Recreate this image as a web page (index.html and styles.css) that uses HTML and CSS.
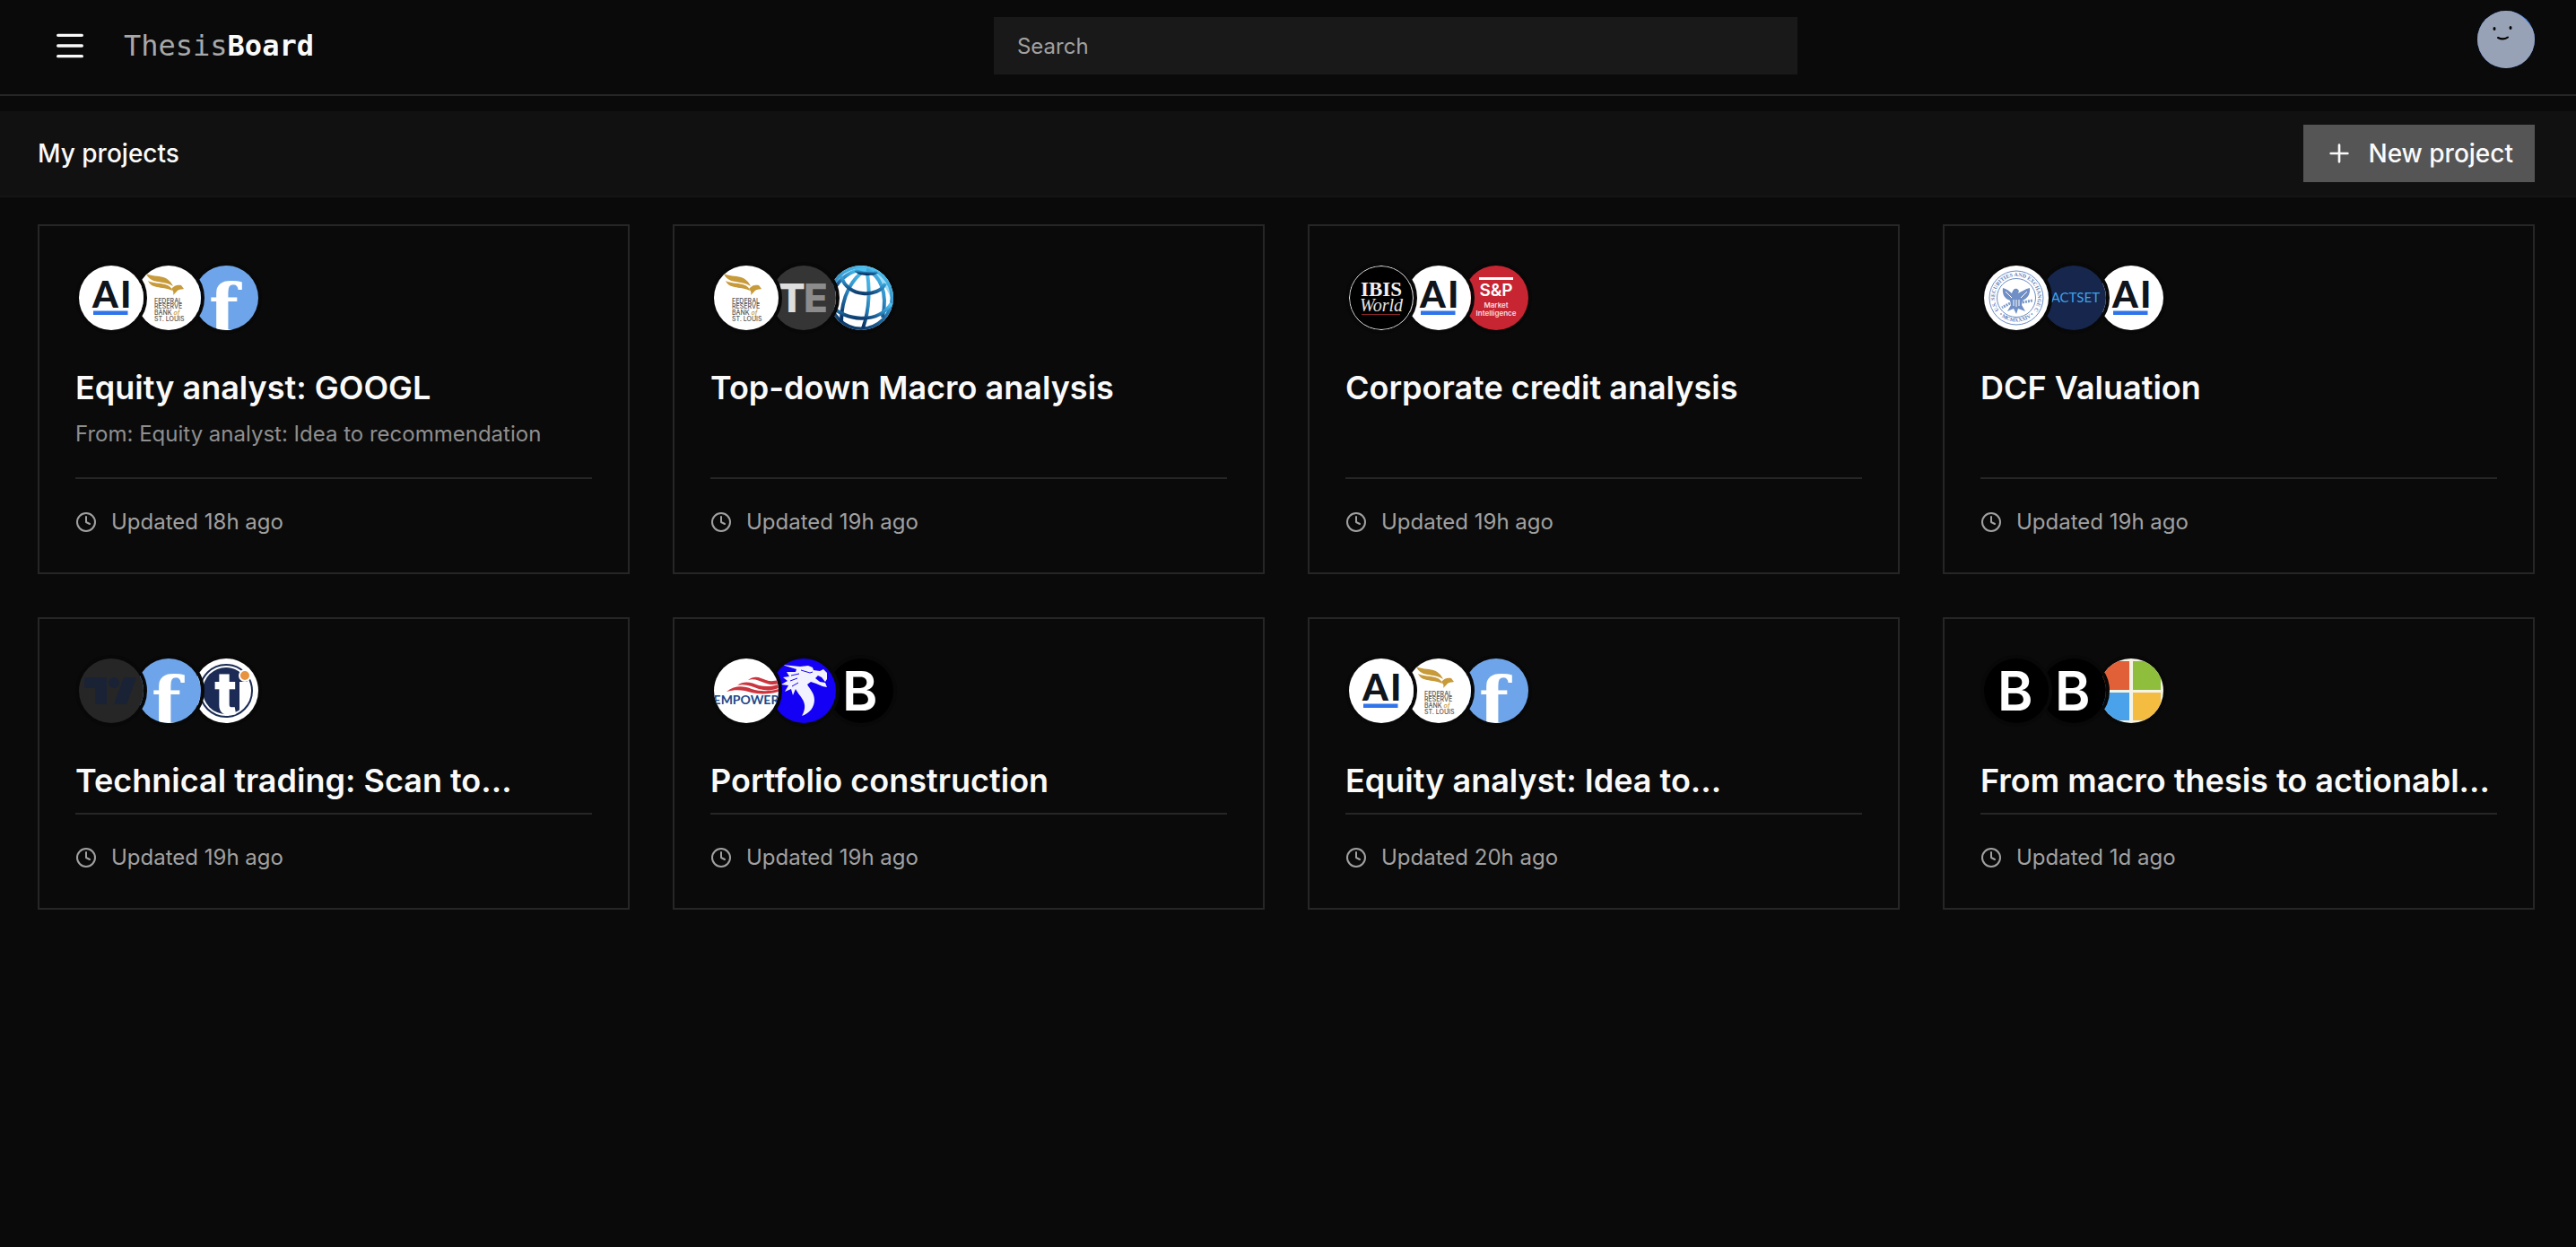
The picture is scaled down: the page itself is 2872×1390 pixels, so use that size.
FILE: index.html
```html
<!DOCTYPE html>
<html lang="en">
<head>
<meta charset="utf-8">
<meta name="viewport" content="width=device-width, initial-scale=1">
<title>ThesisBoard</title>
<link rel="stylesheet" href="styles.css">
</head>
<body>
<svg class="shared-defs" aria-hidden="true">
  <defs>
    <linearGradient id="globe-blue" x1="0.7" y1="0" x2="0.3" y2="1">
      <stop offset="0" stop-color="#4cc0f0"/>
      <stop offset="0.5" stop-color="#2a86c0"/>
      <stop offset="1" stop-color="#0b3566"/>
    </linearGradient>
    <path id="seal-top" d="M16.500 50 A24 24 0 1 1 55.500 50"/>
    <path id="seal-bottom" d="M12 49 A28 28 0 0 0 60 49"/>
  </defs>
</svg>
<svg class="sprite" aria-hidden="true">
  <symbol id="clock" viewBox="0 0 24 24"><g fill="none" stroke="currentColor" stroke-width="2" stroke-linecap="round" stroke-linejoin="round"><circle cx="12" cy="12" r="10"/><path d="M12 6v6l4 2"/></g></symbol>

  <symbol id="logo-ai" viewBox="0 0 72 72">
    <rect width="72" height="72" fill="#fff"/>
    <text class="ai-letters" x="15 46" y="47">AI</text>
    <rect x="16" y="50.500" width="38.500" height="4.500" fill="#2f74ea"/>
  </symbol>

  <symbol id="logo-fred" viewBox="0 0 72 72">
    <rect width="72" height="72" fill="#fff"/>
    <g fill="#c79a3a">
      <path d="M11 9C16 12 24 11 30 13C36 15 39 19 41 23C35 19 29 19 24 18C17 17 13 14 11 9Z"/>
      <path d="M13 17C18 20 26 19 32 21C36 22 39 24 40 28C34 25 28 25 23 24C18 23 15 21 13 17Z"/>
      <path d="M39 26C42 22 46 21 50 22L53 26C50 27 47 26 45 29L41 33C42 30 41 28 39 26Z"/>
    </g>
    <g class="fred-text">
      <text x="20" y="42">FEDERAL</text>
      <text x="20" y="48">RESERVE</text>
      <text x="20" y="55">BANK <tspan class="fred-of">of</tspan></text>
      <text x="20" y="62">ST. LOUIS</text>
    </g>
  </symbol>

  <symbol id="logo-f" viewBox="0 0 72 72">
    <rect width="72" height="72" fill="#6ea5ea"/>
    <text class="f-letter" x="17" y="75">f</text>
  </symbol>

  <symbol id="logo-te" viewBox="0 0 72 72">
    <rect width="72" height="72" fill="#353535"/>
    <text class="te-letters" x="8 36" y="52"><tspan fill="#dedede">T</tspan><tspan fill="#8c8c8c">E</tspan></text>
  </symbol>

  <symbol id="logo-globe" viewBox="0 0 72 72">
    <rect width="72" height="72" fill="#fff"/>
    <path d="M30 1C45-2 66 8 71 26L73 44C66 28 58 12 41 5Z" fill="#5ec4ee" opacity="0.600"/>
    <g fill="none" stroke="url(#globe-blue)" stroke-width="4">
      <circle cx="36" cy="36" r="34.500"/>
      <path d="M42 4C26 14 14 34 14 63"/>
      <path d="M42 4C46 22 46 48 38 70"/>
      <path d="M42 4C58 12 66 30 60 58"/>
      <path d="M42 4C26 4 12 14 5 28"/>
      <path d="M14 12C20 36 56 36 63 20"/>
      <path d="M2 44C18 62 54 66 70 42"/>
      <path d="M30 5C35 10 48 10 54 7"/>
    </g>
  </symbol>

  <symbol id="logo-ibis" viewBox="0 0 72 72">
    <rect width="72" height="72" fill="#000"/>
    <circle cx="36" cy="36" r="35.500" fill="none" stroke="#f4f4f4"/>
    <text class="ibis-top" x="36" y="34">IBIS</text>
    <text class="ibis-bottom" x="36" y="51">World</text>
    <path d="M14 54.500H57" stroke="#8c2626"/>
  </symbol>

  <symbol id="logo-sp" viewBox="0 0 72 72">
    <rect width="72" height="72" fill="#c72531"/>
    <rect x="17" y="13" width="38" height="3" fill="#fff"/>
    <text class="sp-name" x="36" y="34">S&amp;P</text>
    <text class="sp-sub" x="36" y="47">Market</text>
    <text class="sp-sub" x="36" y="56">Intelligence</text>
  </symbol>

  <symbol id="logo-sec" viewBox="0 0 72 72">
    <rect width="72" height="72" fill="#fff"/>
    <g fill="none" stroke="#6b8cc2"><circle cx="36" cy="36" r="30"/><circle cx="36" cy="36" r="21.500"/></g>
    <g class="seal-text">
      <text><textPath href="#seal-top">U.S. SECURITIES AND EXCHANGE COMMISSION</textPath></text>
      <text><textPath href="#seal-bottom" startOffset="50%" text-anchor="middle">• MCMXXXIV •</textPath></text>
    </g>
    <path fill="#6f8fc6" d="M21 25C25 26 28 28 31 31C32 27 34 25 37 26L39 28L38 31C42 29 46 26 51 25C52 32 48 37 43 39L42 44L46 51L38 48L36 54L33 48L26 51L30 44L29 39C23 37 20 32 21 25Z"/>
    <path fill="none" stroke="#fff" d="M24 29L31 36M48 29L41 36M33 38V45M36 38V46M39 38V45"/>
    <path fill="none" stroke="#7d9acb" stroke-width="3" stroke-dasharray="2 1" d="M29 42L20 47M43 41L54 39"/>
  </symbol>

  <symbol id="logo-factset" viewBox="0 0 72 72">
    <rect width="72" height="72" fill="#16264d"/>
    <text class="factset-name" x="65" y="41">FACTSET</text>
  </symbol>

  <symbol id="logo-tv" viewBox="0 0 72 72">
    <rect width="72" height="72" fill="#262626"/>
    <g fill="#1a2236"><path d="M6 21H31V51H18V33H6Z"/><circle cx="39" cy="27" r="6"/><path d="M50 21H64L53 51H39Z"/></g>
  </symbol>

  <symbol id="logo-ti" viewBox="0 0 72 72">
    <rect width="72" height="72" fill="#fff"/>
    <circle cx="36" cy="36" r="26" fill="#1b2b55"/>
    <path d="M51 26H64V52L51 60Z" fill="#fff"/>
    <circle cx="36" cy="36" r="29" fill="none" stroke="#1b2b55" stroke-width="2"/>
    <text class="ti-letter" x="23" y="62">t</text>
    <circle cx="57" cy="19" r="6" fill="#e8933d" stroke="#fff" stroke-width="2"/>
  </symbol>

  <symbol id="logo-empower" viewBox="0 0 72 72">
    <rect width="72" height="72" fill="#fff"/>
    <g fill="#cb353e">
      <path d="M38 24C46 18 52 22 58 24C63 26 67 25 72 24V28C66 30 61 29 56 27C50 25 45 22 38 24Z"/>
      <path d="M26 30C34 24 42 27 50 30C58 32 65 31 72 29V33C65 36 58 36 50 34C42 31 35 28 26 30Z"/>
      <path d="M14 37C24 29 34 31 42 34C52 37 62 37 72 34V37C62 40 50 40 42 38C34 35 24 34 14 37Z"/>
    </g>
    <text class="empower-name" x="36" y="51">EMPOWER</text>
  </symbol>

  <symbol id="logo-dragon" viewBox="0 0 72 72">
    <rect width="72" height="72" fill="#1400f4"/>
    <path fill="#f1f1ff" d="M12 7L32 9L41 8L46 10L47 13L54 14L58 12L62 16L62 23L60 26L56 21L52 19L49 22L54 26L60 27L62 32L57 31L50 28L44 26L40 29C43 34 48 39 48 46C48 54 43 61 34 64C38 57 38 51 35 46C32 41 29 38 27 34L24 41L22 34L15 37L19 30L11 29L18 25L13 21L20 20L17 15L27 15L28 12Z"/>
    <path fill="none" stroke="#1400f4" d="M33 13L43 16L46 15M22 19L31 17M21 25L29 22M23 31L30 27"/>
  </symbol>

  <symbol id="logo-b" viewBox="0 0 72 72">
    <rect width="72" height="72" fill="#000"/>
    <text class="b-letter" x="15" y="58">B</text>
  </symbol>

  <symbol id="logo-windows" viewBox="0 0 72 72">
    <rect width="72" height="72" fill="#f5f3e6"/>
    <rect x="2" y="3" width="32" height="32" fill="#e16038"/>
    <rect x="38" y="3" width="31" height="32" fill="#8fbe3c"/>
    <rect x="2" y="38" width="32" height="31" fill="#4aa3ea"/>
    <rect x="38" y="38" width="31" height="31" fill="#f4bd42"/>
  </symbol>
</svg>

<header class="topbar">
  <div class="brand">
    <button class="menu-button" type="button" aria-label="Open menu">
      <svg class="menu-icon" viewBox="0 0 24 24" aria-hidden="true"><path d="M4 5h16M4 12h16M4 19h16" fill="none" stroke="currentColor" stroke-width="2" stroke-linecap="round"/></svg>
    </button>
    <a class="wordmark" href="#">Thesis<strong>Board</strong></a>
  </div>
  <input class="search" type="search" placeholder="Search" aria-label="Search">
  <button class="profile" type="button" aria-label="Account">
    <svg class="profile-face" viewBox="0 0 64 64" aria-hidden="true">
      <rect width="64" height="64" fill="#2f6fe8"/>
      <path d="M0 0H38C50 4 58 12 64 25V64H0Z" fill="#98a2b6"/>
      <ellipse cx="19" cy="20" rx="1.500" ry="2"/><ellipse cx="37" cy="19" rx="1.500" ry="2"/>
      <path d="M23 30Q29 33 34 29.500" fill="none" stroke="#000" stroke-width="2" stroke-linecap="round"/>
    </svg>
  </button>
</header>

<main>
  <div class="section-bar">
    <h1 class="section-title">My projects</h1>
    <button class="new-project" type="button">
      <svg class="plus-icon" viewBox="0 0 24 24" aria-hidden="true"><path d="M5 12h14M12 5v14" fill="none" stroke="currentColor" stroke-width="2" stroke-linecap="round"/></svg>
      New project
    </button>
  </div>

  <ul class="projects">
    <li class="card">
      <div class="sources"><svg class="source"><use href="#logo-ai"/></svg><svg class="source"><use href="#logo-fred"/></svg><svg class="source"><use href="#logo-f"/></svg></div>
      <h2 class="card-title"><a href="#">Equity analyst: GOOGL</a></h2>
      <p class="card-origin">From: Equity analyst: Idea to recommendation</p>
      <p class="card-updated"><svg class="clock"><use href="#clock"/></svg>Updated 18h ago</p>
    </li>
    <li class="card">
      <div class="sources"><svg class="source"><use href="#logo-fred"/></svg><svg class="source"><use href="#logo-te"/></svg><svg class="source"><use href="#logo-globe"/></svg></div>
      <h2 class="card-title"><a href="#">Top-down Macro analysis</a></h2>
      <p class="card-updated"><svg class="clock"><use href="#clock"/></svg>Updated 19h ago</p>
    </li>
    <li class="card">
      <div class="sources"><svg class="source"><use href="#logo-ibis"/></svg><svg class="source"><use href="#logo-ai"/></svg><svg class="source"><use href="#logo-sp"/></svg></div>
      <h2 class="card-title"><a href="#">Corporate credit analysis</a></h2>
      <p class="card-updated"><svg class="clock"><use href="#clock"/></svg>Updated 19h ago</p>
    </li>
    <li class="card">
      <div class="sources"><svg class="source"><use href="#logo-sec"/></svg><svg class="source"><use href="#logo-factset"/></svg><svg class="source"><use href="#logo-ai"/></svg></div>
      <h2 class="card-title"><a href="#">DCF Valuation</a></h2>
      <p class="card-updated"><svg class="clock"><use href="#clock"/></svg>Updated 19h ago</p>
    </li>
    <li class="card">
      <div class="sources"><svg class="source"><use href="#logo-tv"/></svg><svg class="source"><use href="#logo-f"/></svg><svg class="source"><use href="#logo-ti"/></svg></div>
      <h2 class="card-title"><a href="#">Technical trading: Scan to…</a></h2>
      <p class="card-updated"><svg class="clock"><use href="#clock"/></svg>Updated 19h ago</p>
    </li>
    <li class="card">
      <div class="sources"><svg class="source"><use href="#logo-empower"/></svg><svg class="source"><use href="#logo-dragon"/></svg><svg class="source"><use href="#logo-b"/></svg></div>
      <h2 class="card-title"><a href="#">Portfolio construction</a></h2>
      <p class="card-updated"><svg class="clock"><use href="#clock"/></svg>Updated 19h ago</p>
    </li>
    <li class="card">
      <div class="sources"><svg class="source"><use href="#logo-ai"/></svg><svg class="source"><use href="#logo-fred"/></svg><svg class="source"><use href="#logo-f"/></svg></div>
      <h2 class="card-title"><a href="#">Equity analyst: Idea to…</a></h2>
      <p class="card-updated"><svg class="clock"><use href="#clock"/></svg>Updated 20h ago</p>
    </li>
    <li class="card">
      <div class="sources"><svg class="source"><use href="#logo-b"/></svg><svg class="source"><use href="#logo-b"/></svg><svg class="source"><use href="#logo-windows"/></svg></div>
      <h2 class="card-title"><a href="#">From macro thesis to actionabl…</a></h2>
      <p class="card-updated"><svg class="clock"><use href="#clock"/></svg>Updated 1d ago</p>
    </li>
  </ul>
</main>
</body>
</html>
```
FILE: styles.css
```css
* { box-sizing: border-box; }

body {
  margin: 0;
  min-height: 100vh;
  background: #0a0a0a;
  color: #fafafa;
  font-family: Inter, "Liberation Sans", sans-serif;
  font-size: 24px;
  line-height: 32px;
}

button, input { font: inherit; color: inherit; border: 0; border-radius: 0; }
button { cursor: pointer; padding: 0; background: none; }
a { color: inherit; text-decoration: none; }
h1, h2, p, ul { margin: 0; padding: 0; }
.shared-defs { position: absolute; width: 0; height: 0; }
.sprite { display: none; }

/* Top bar */
.topbar {
  display: flex;
  align-items: center;
  justify-content: space-between;
  gap: 24px;
  min-height: 107px;
  padding: 12px 46px 15px 42px;
  border-bottom: 2px solid #262626;
}
.brand { display: flex; align-items: center; gap: 24px; }
.menu-button { display: flex; padding: 16px; }
.menu-icon { width: 40px; height: 40px; }
.wordmark {
  font-family: "DejaVu Sans Mono", "Liberation Mono", monospace;
  font-size: 32px;
  line-height: 40px;
  color: #a8a8a8;
}
.wordmark strong { color: #fafafa; font-weight: 700; }
.search {
  flex: 0 1 896px;
  min-width: 0;
  height: 64px;
  padding: 0 26px;
  background: #191919;
  outline: none;
}
.search::placeholder { color: #a1a1a1; opacity: 1; }
.profile {
  align-self: flex-start;
  flex: none;
  width: 64px;
  height: 64px;
  border-radius: 50%;
  overflow: hidden;
}
.profile-face { display: block; width: 100%; height: 100%; }

/* Section heading */
.section-bar {
  display: flex;
  align-items: center;
  justify-content: space-between;
  margin-top: 17px;
  padding: 15px 46px 15px 42px;
  background: #111;
  border-bottom: 2px solid #151515;
}
.section-title { font-size: 28px; line-height: 40px; font-weight: 500; }
.new-project {
  display: flex;
  align-items: center;
  gap: 16px;
  height: 64px;
  padding: 0 24px;
  background: #555;
  font-size: 28px;
  font-weight: 500;
}
.plus-icon { width: 32px; height: 32px; }

/* Project cards */
.projects {
  display: grid;
  grid-template-columns: repeat(4, minmax(0, 1fr));
  gap: 48px;
  padding: 30px 46px 48px 42px;
  list-style: none;
}
.card {
  display: flex;
  flex-direction: column;
  padding: 40px;
  border: 2px solid #262626;
}
.sources { display: flex; margin-bottom: 36px; }
.source {
  position: relative;
  flex: none;
  width: 80px;
  height: 80px;
  margin-right: -16px;
  border: 4px solid #080808;
  border-radius: 50%;
  overflow: hidden;
}
.source:nth-child(1) { z-index: 3; }
.source:nth-child(2) { z-index: 2; }
.source:nth-child(3) { z-index: 1; }
.card-title {
  margin-bottom: 12px;
  font-size: 36px;
  line-height: 48px;
  font-weight: 600;
  white-space: nowrap;
  overflow: hidden;
  text-overflow: ellipsis;
}
.card-origin { margin-bottom: 32px; color: #8f8f8f; }
.card-updated {
  display: flex;
  align-items: center;
  gap: 16px;
  margin-top: auto;
  padding-top: 32px;
  border-top: 2px solid #262626;
  color: #a1a1a1;
}
.clock { width: 24px; height: 24px; }

/* Lettering inside the source logos */
.ai-letters { font: 900 41px Lato, sans-serif; fill: #10151c; }
.fred-text { font: 500 7px Inter, sans-serif; fill: #555; }
.fred-of { font-style: italic; fill: #c79a3a; }
.f-letter { font: 700 76px "DejaVu Serif", serif; fill: #fff; }
.te-letters { font: 800 44px Inter, sans-serif; }
.ibis-top { font: 700 23px "Liberation Serif", serif; fill: #f0f0f0; text-anchor: middle; }
.ibis-bottom { font: italic 400 20px "Liberation Serif", serif; fill: #e4e4e4; text-anchor: middle; }
.sp-name { font: 600 19px Inter, sans-serif; fill: #fff; text-anchor: middle; }
.sp-sub { font: 600 8px Inter, sans-serif; fill: #f6dfe0; text-anchor: middle; }
.seal-text { font: 700 6px "Liberation Serif", serif; fill: #5a7cb8; }
.factset-name { font: 400 15px Lato, sans-serif; fill: #3fa2e8; text-anchor: end; }
.ti-letter { font: 800 66px Inter, sans-serif; fill: #fff; }
.empower-name { font: 700 14px Lato, sans-serif; fill: #20498a; text-anchor: middle; }
.b-letter { font: 600 60px Inter, sans-serif; fill: #fff; }

@media (max-width: 1600px) {
  .projects { grid-template-columns: repeat(2, minmax(0, 1fr)); }
}
@media (max-width: 800px) {
  .projects { grid-template-columns: minmax(0, 1fr); }
}
```
